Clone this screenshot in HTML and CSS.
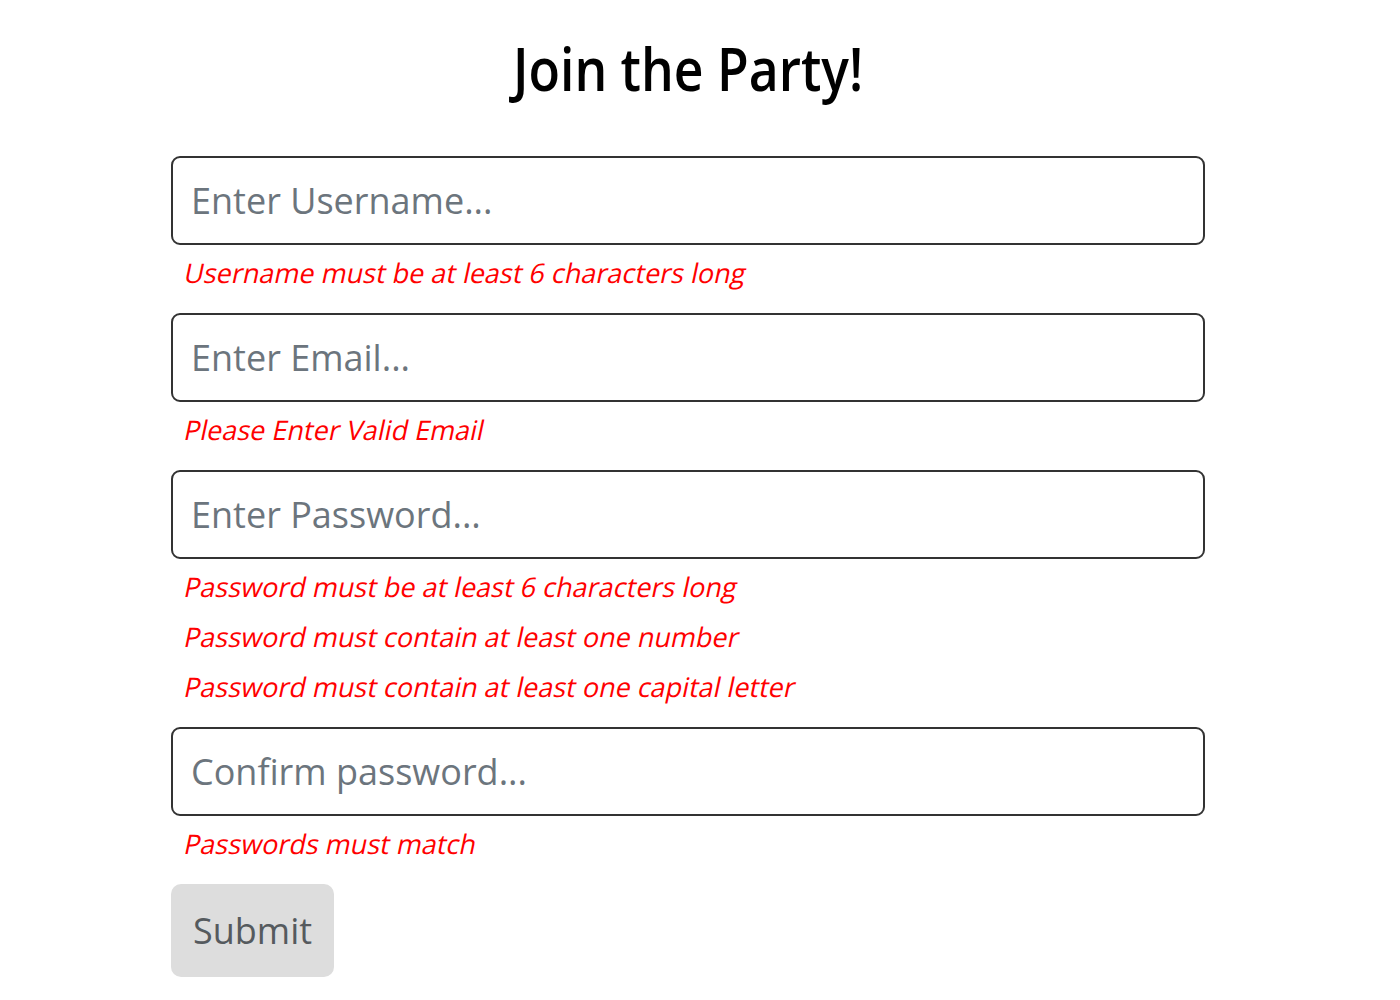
FILE: index.html
```html
<!DOCTYPE html>
<html lang="en">
<head>
<meta charset="utf-8">
<title>Join the Party!</title>
<link rel="stylesheet" href="styles.css">
</head>
<body>
<main class="page">
  <h1 class="title"><span class="title-text">Join the Party!</span></h1>
  <form class="form">
    <div class="field">
      <input class="input" type="text" placeholder="Enter Username...">
      <div class="errors">
        <p class="error"><span class="error-text">Username must be at least 6 characters long</span></p>
      </div>
    </div>
    <div class="field">
      <input class="input" type="email" placeholder="Enter Email...">
      <div class="errors">
        <p class="error"><span class="error-text">Please Enter Valid Email</span></p>
      </div>
    </div>
    <div class="field">
      <input class="input" type="password" placeholder="Enter Password...">
      <div class="errors">
        <p class="error"><span class="error-text">Password must be at least 6 characters long</span></p>
        <p class="error"><span class="error-text">Password must contain at least one number</span></p>
        <p class="error"><span class="error-text">Password must contain at least one capital letter</span></p>
      </div>
    </div>
    <div class="field">
      <input class="input" type="password" placeholder="Confirm password...">
      <div class="errors">
        <p class="error"><span class="error-text">Passwords must match</span></p>
      </div>
    </div>
    <div class="actions">
      <button class="submit" type="button">Submit</button>
    </div>
  </form>
</main>
</body>
</html>
```
FILE: styles.css
```css
* { box-sizing: border-box; }
html, body { margin: 0; padding: 0; background: #fff; }
body { font-family: "Open Sans", "Noto Sans", sans-serif; color: #000; padding-right: 24px; }
.page { width: 1034px; margin: 0 auto; }
.title {
  margin: 0;
  padding-top: 33px;
  height: 156px;
  text-align: center;
  font-size: 59px;
  font-weight: 600;
  line-height: 70px;
}
.title-text { display: inline-block; transform: scaleX(0.875); }
.form { display: flex; flex-direction: column; gap: 14px; }
.field { display: flex; flex-direction: column; }
.input {
  display: block;
  width: 100%;
  height: 89px;
  border: 2px solid #333;
  border-radius: 9px;
  padding: 0 18px;
  font-family: inherit;
  font-size: 36px;
  color: #333;
  background: #fff;
  outline: none;
}
.input::placeholder { color: #6c757d; opacity: 1; }
.errors { padding-top: 4px; padding-left: 12px; }
.error {
  margin: 0;
  height: 50px;
  line-height: 47px;
  font-size: 27px;
  color: #ff0000;
}
.error-text { display: inline-block; transform: skewX(-12deg); transform-origin: 0 70%; }
.actions { display: flex; }
.submit {
  height: 93px;
  padding: 0 22px;
  border: none;
  border-radius: 10px;
  background: #dddddd;
  color: #555a5e;
  font-family: inherit;
  font-size: 36px;
}
```
